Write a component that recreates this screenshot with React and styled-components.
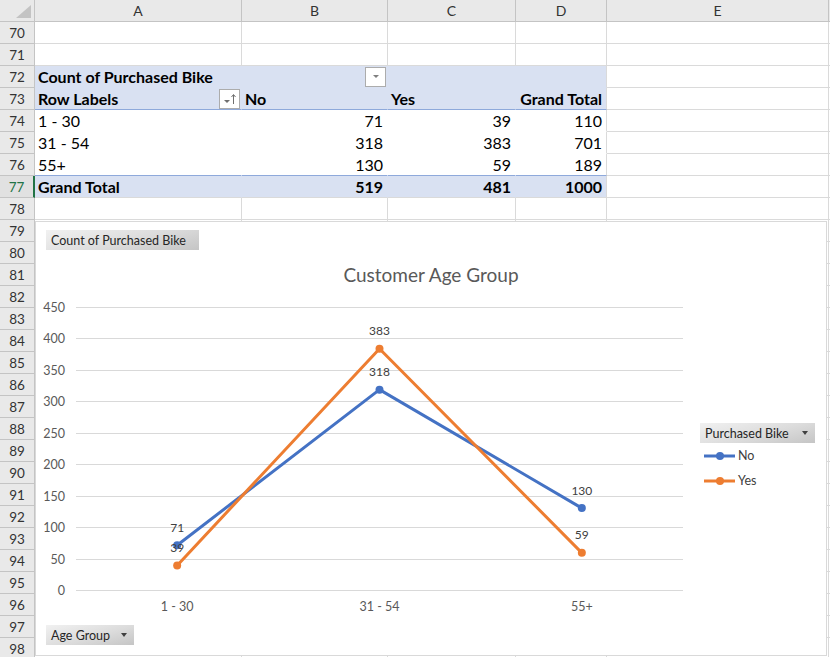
import React from "react";
import styled, { createGlobalStyle } from "styled-components";

const GlobalStyle = createGlobalStyle`
  html, body {
    margin: 0;
    padding: 0;
    background: #fff;
    overflow: hidden;
  }
  body {
    font-family: Lato, "Liberation Sans", Arial, sans-serif;
    color: #000;
  }
`;

const LETTERS = ["A", "B", "C", "D", "E", ""];
const FIRST_ROW = 70;
const LAST_ROW = 98;

// pivot table, rows 72..77, columns A..D
const PIVOT = {
  72: {
    band: true,
    bottom: "none",
    cells: [{ text: "Count of Purchased Bike", bold: true }, { filter: "drop" }, {}, {}],
  },
  73: {
    band: true,
    bottom: "blue",
    cells: [
      { text: "Row Labels", bold: true, filter: "sort" },
      { text: "No", bold: true },
      { text: "Yes", bold: true },
      { text: "Grand Total", bold: true, right: true },
    ],
  },
  74: {
    bottom: "none",
    cells: [{ text: "1 - 30" }, { text: "71", right: true }, { text: "39", right: true }, { text: "110", right: true }],
  },
  75: {
    bottom: "none",
    cells: [{ text: "31 - 54" }, { text: "318", right: true }, { text: "383", right: true }, { text: "701", right: true }],
  },
  76: {
    bottom: "blue",
    cells: [{ text: "55+" }, { text: "130", right: true }, { text: "59", right: true }, { text: "189", right: true }],
  },
  77: {
    band: true,
    bottom: "gray",
    cells: [
      { text: "Grand Total", bold: true },
      { text: "519", bold: true, right: true },
      { text: "481", bold: true, right: true },
      { text: "1000", bold: true, right: true },
    ],
  },
};

const SELECTED_ROW = 77;

// chart data
const PLOT_W = 660;
const PLOT_H = 325;
const X0 = 40;
const X1 = 647;
const ZERO = 300;
const SCALE = 0.63;
const TICKS = [0, 50, 100, 150, 200, 250, 300, 350, 400, 450];
const CATEGORIES = ["1 - 30", "31 - 54", "55+"];
const SERIES = [
  { name: "No", color: "#4472C4", values: [71, 318, 130] },
  { name: "Yes", color: "#ED7D31", values: [39, 383, 59] },
];
const step = (X1 - X0) / CATEGORIES.length;
const px = (i) => X0 + step * (i + 0.5);
const py = (v) => ZERO - v * SCALE;

const Sheet = styled.div`
  position: relative;
  display: grid;
  grid-template-columns: 35px 207px 146px 128px 91px 222px 1fr;
  grid-auto-rows: 22px;
  width: 830px;
  height: 657px;
  overflow: hidden;
`;

const Corner = styled.div`
  box-sizing: border-box;
  background: #e9e9e9;
  border-right: 1px solid #c4c4c4;
  border-bottom: 1px solid #c4c4c4;
  display: flex;
  align-items: flex-end;
  justify-content: flex-end;
  padding: 0 3px 3px 0;
`;

const CornerMark = styled.span`
  width: 0;
  height: 0;
  border-left: 15px solid transparent;
  border-bottom: 13px solid #c3c3c3;
`;

const ColHead = styled.div`
  box-sizing: border-box;
  background: #e9e9e9;
  border-right: 1px solid #c4c4c4;
  border-bottom: 1px solid #c4c4c4;
  display: flex;
  align-items: center;
  justify-content: center;
  font-size: 14px;
  color: #333;
`;

const RowHead = styled.div`
  box-sizing: border-box;
  background: ${(p) => (p.$selected ? "#e1e1e1" : "#e9e9e9")};
  border-bottom: 1px solid #c4c4c4;
  border-right: ${(p) => (p.$selected ? "2px solid #217346" : "1px solid #c4c4c4")};
  display: flex;
  align-items: center;
  justify-content: center;
  font-size: 13.5px;
  color: ${(p) => (p.$selected ? "#217346" : "#333")};
`;

const bottomColor = { gray: "#dadada", blue: "#8ea9db", none: "transparent" };

const Cell = styled.div`
  box-sizing: border-box;
  display: flex;
  align-items: center;
  justify-content: ${(p) => (p.$right ? "flex-end" : "flex-start")};
  gap: 4px;
  padding: 0 4px 0 3px;
  background: ${(p) => (p.$band ? "#d9e1f2" : "#fff")};
  border-right: 1px solid ${(p) => (p.$noRight ? "transparent" : "#dadada")};
  border-bottom: 1px solid ${(p) => bottomColor[p.$bottom || "gray"]};
  font-size: 16px;
  font-weight: ${(p) => (p.$bold ? 700 : 400)};
  white-space: nowrap;
  overflow: visible;
`;

const CellText = styled.span`
  flex: none;
`;

const FilterButton = styled.span`
  box-sizing: border-box;
  width: 21px;
  height: 20px;
  margin-right: -3px;
  margin-left: auto;
  border: 1px solid #acacac;
  background: #fff;
  display: flex;
  align-items: center;
  justify-content: center;
`;

const Chart = styled.div`
  position: absolute;
  left: 35px;
  top: 221px;
  width: 792px;
  height: 435px;
  box-sizing: border-box;
  border: 1px solid #d9d9d9;
  background: #fff;
  padding: 8px 10px 0 10px;
  display: flex;
  flex-direction: column;
  align-items: flex-start;
`;

const FieldButton = styled.div`
  box-sizing: border-box;
  width: ${(p) => p.$w}px;
  height: 20px;
  display: flex;
  align-items: center;
  justify-content: space-between;
  padding: 0 7px 0 5px;
  background: linear-gradient(165deg, #f1f1f1 0%, #dcdcdc 55%, #c5c5c5 100%);
  font-size: 12.5px;
  color: #262626;
  white-space: nowrap;
`;

const Caret = styled.span`
  width: 0;
  height: 0;
  border-left: 3px solid transparent;
  border-right: 3px solid transparent;
  border-top: 4px solid #404040;
`;

const Title = styled.div`
  align-self: stretch;
  margin-top: 13px;
  height: 24px;
  line-height: 24px;
  text-align: center;
  font-size: 19px;
  color: #595959;
`;

const Body = styled.div`
  display: flex;
  align-items: flex-start;
  margin: 3px 0 0 -10px;
`;

const Plot = styled.svg`
  display: block;
  flex: none;
`;

const AxisText = styled.text`
  font-family: Lato, "Liberation Sans", Arial, sans-serif;
  font-size: 12.5px;
  fill: #595959;
`;

const DataLabel = styled.text`
  font-family: Lato, "Liberation Sans", Arial, sans-serif;
  font-size: 12px;
  fill: #404040;
`;

const Legend = styled.div`
  margin: 133px 0 0 4px;
  display: flex;
  flex-direction: column;
`;

const LegendItem = styled.div`
  height: 25px;
  display: flex;
  align-items: center;
  gap: 3px;
  padding-left: 4px;
  font-size: 12.5px;
  color: #404040;
`;

const Footer = styled.div`
  margin-top: 10px;
`;

function DropIcon() {
  return (
    <svg width="8" height="5" viewBox="0 0 8 5">
      <path d="M1 1h6L4 4z" fill="#7f7f7f" />
    </svg>
  );
}

function SortIcon() {
  return (
    <svg width="14" height="14" viewBox="0 0 14 14">
      <path d="M1 8h6L4 11z" fill="#6f6f6f" />
      <path d="M10.5 12V3M8.5 5l2-2.5 2 2.5" stroke="#6f6f6f" strokeWidth="1" fill="none" />
    </svg>
  );
}

function LegendMark({ color }) {
  return (
    <svg width="31" height="10" viewBox="0 0 31 10">
      <line x1="0" y1="5" x2="31" y2="5" stroke={color} strokeWidth="3" />
      <circle cx="16" cy="5" r="4" fill={color} />
    </svg>
  );
}

function PivotCell({ cell, band, bottom, col }) {
  return (
    <Cell
      $band={band}
      $bottom={bottom}
      $bold={cell.bold}
      $right={cell.right}
      $noRight={col < 3}
    >
      {cell.text && <CellText>{cell.text}</CellText>}
      {cell.filter === "drop" && (
        <FilterButton>
          <DropIcon />
        </FilterButton>
      )}
      {cell.filter === "sort" && (
        <FilterButton>
          <SortIcon />
        </FilterButton>
      )}
    </Cell>
  );
}

function Row({ n }) {
  const pivot = PIVOT[n];
  return (
    <>
      <RowHead $selected={n === SELECTED_ROW}>{n}</RowHead>
      {pivot
        ? pivot.cells.map((cell, i) => (
            <PivotCell key={i} cell={cell} band={pivot.band} bottom={pivot.bottom} col={i} />
          ))
        : [0, 1, 2, 3].map((i) => <Cell key={i} />)}
      <Cell />
      <Cell />
    </>
  );
}

function LineChart() {
  return (
    <Chart>
      <FieldButton $w={153}>Count of Purchased Bike</FieldButton>
      <Title>Customer Age Group</Title>
      <Body>
        <Plot width={PLOT_W} height={PLOT_H} viewBox={`0 0 ${PLOT_W} ${PLOT_H}`}>
          {TICKS.map((t) => {
            const y = Math.round(py(t)) + 0.5;
            return (
              <g key={t}>
                <line x1={X0} x2={X1} y1={y} y2={y} stroke="#d9d9d9" strokeWidth="1" />
                <AxisText x={29} y={y} textAnchor="end" dominantBaseline="central">
                  {t}
                </AxisText>
              </g>
            );
          })}
          {CATEGORIES.map((c, i) => (
            <AxisText key={c} x={px(i)} y={316} textAnchor="middle" dominantBaseline="central">
              {c}
            </AxisText>
          ))}
          {SERIES.map((s) => (
            <g key={s.name}>
              <polyline
                points={s.values.map((v, i) => `${px(i)},${py(v)}`).join(" ")}
                fill="none"
                stroke={s.color}
                strokeWidth="3"
                strokeLinejoin="round"
                strokeLinecap="round"
              />
              {s.values.map((v, i) => (
                <circle key={i} cx={px(i)} cy={py(v)} r="4" fill={s.color} />
              ))}
            </g>
          ))}
          {SERIES.map((s) =>
            s.values.map((v, i) => (
              <DataLabel
                key={s.name + i}
                x={px(i)}
                y={py(v) - 18}
                textAnchor="middle"
                dominantBaseline="central"
              >
                {v}
              </DataLabel>
            ))
          )}
        </Plot>
        <Legend>
          <FieldButton $w={115}>
            Purchased Bike
            <Caret />
          </FieldButton>
          {SERIES.map((s) => (
            <LegendItem key={s.name}>
              <LegendMark color={s.color} />
              {s.name}
            </LegendItem>
          ))}
        </Legend>
      </Body>
      <Footer>
        <FieldButton $w={88}>
          Age Group
          <Caret />
        </FieldButton>
      </Footer>
    </Chart>
  );
}

export default function App() {
  const rows = [];
  for (let n = FIRST_ROW; n <= LAST_ROW; n++) rows.push(n);
  return (
    <>
      <GlobalStyle />
      <Sheet>
        <Corner>
          <CornerMark />
        </Corner>
        {LETTERS.map((l, i) => (
          <ColHead key={i}>{l}</ColHead>
        ))}
        {rows.map((n) => (
          <Row key={n} n={n} />
        ))}
        <LineChart />
      </Sheet>
    </>
  );
}
